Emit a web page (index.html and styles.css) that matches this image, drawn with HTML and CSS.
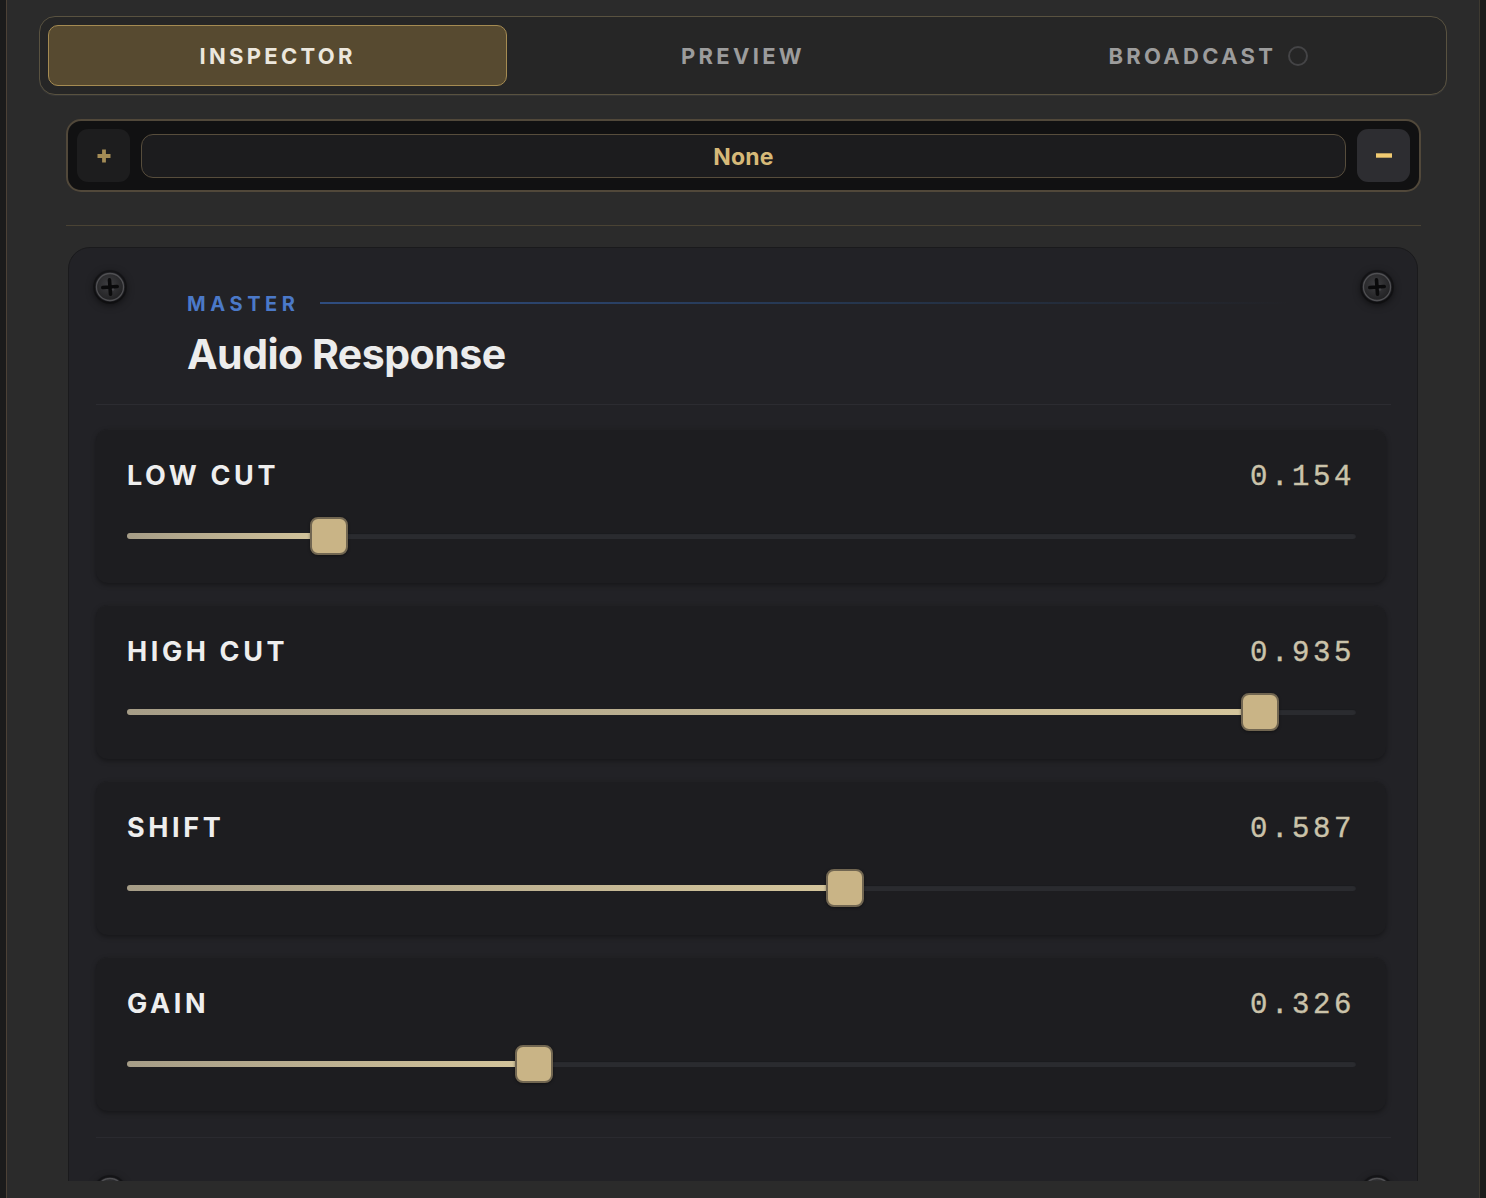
FILE: index.html
```html
<!DOCTYPE html>
<html lang="en">
<head>
<meta charset="utf-8">
<title>Inspector</title>
<link rel="stylesheet" href="styles.css">
</head>
<body>
<div class="app">
  <header class="tabs-wrap">
    <nav class="tabs">
      <button class="tab tab-active">INSPECTOR</button>
      <button class="tab">PREVIEW</button>
      <button class="tab">BROADCAST <span class="live-dot"></span></button>
    </nav>
  </header>

  <section class="preset-wrap">
    <div class="preset">
      <button class="preset-btn preset-add" aria-label="Add preset">
        <svg width="16" height="16" viewBox="0 0 16 16"><path d="M8 1.5v13M1.5 8h13" stroke="#a48c56" stroke-width="3.8" stroke-linecap="butt"/></svg>
      </button>
      <div class="preset-field">None</div>
      <button class="preset-btn preset-remove" aria-label="Remove preset">
        <svg width="16" height="5" viewBox="0 0 16 5"><rect x="0" y="0.3" width="16" height="4.4" fill="#f1cb72"/></svg>
      </button>
    </div>
    <div class="rule"></div>
  </section>

  <main class="scroll">
    <article class="card">
      <svg class="screw screw-tl" width="30" height="30" viewBox="0 0 30 30"><use href="#screw"/></svg>
      <svg class="screw screw-tr" width="30" height="30" viewBox="0 0 30 30"><use href="#screw"/></svg>
      <svg class="screw screw-bl" width="30" height="30" viewBox="0 0 30 30"><use href="#screw"/></svg>
      <svg class="screw screw-br" width="30" height="30" viewBox="0 0 30 30"><use href="#screw"/></svg>

      <div class="card-head">
        <div class="eyebrow"><span>MASTER</span><i class="eyebrow-line"></i></div>
        <h1 class="title">Audio Response</h1>
      </div>

      <div class="params">
        <div class="param">
          <div class="param-row"><span class="param-name">LOW CUT</span><span class="param-value">0.154</span></div>
          <div class="track" style="--v:0.154"><div class="fill"></div><div class="thumb"></div></div>
        </div>
        <div class="param">
          <div class="param-row"><span class="param-name">HIGH CUT</span><span class="param-value">0.935</span></div>
          <div class="track" style="--v:0.935"><div class="fill"></div><div class="thumb"></div></div>
        </div>
        <div class="param">
          <div class="param-row"><span class="param-name">SHIFT</span><span class="param-value">0.587</span></div>
          <div class="track" style="--v:0.587"><div class="fill"></div><div class="thumb"></div></div>
        </div>
        <div class="param">
          <div class="param-row"><span class="param-name">GAIN</span><span class="param-value">0.326</span></div>
          <div class="track" style="--v:0.326"><div class="fill"></div><div class="thumb"></div></div>
        </div>
      </div>

      <div class="card-foot"></div>
    </article>
  </main>
</div>

<svg width="0" height="0" style="position:absolute">
  <defs>
    <radialGradient id="screwFace" cx="45%" cy="40%" r="60%">
      <stop offset="0" stop-color="#3e3e41"/>
      <stop offset="1" stop-color="#212123"/>
    </radialGradient>
    <symbol id="screw" viewBox="0 0 30 30">
      <circle cx="15" cy="15" r="13.5" fill="url(#screwFace)" stroke="#505053" stroke-width="1.3"/>
      <g transform="rotate(-4 15 15)" stroke="#0a0a0b" stroke-width="3.6" stroke-linecap="round">
        <path d="M15 7.8v14.4M7.8 15h14.4"/>
      </g>
      <circle cx="18" cy="17.5" r="1.3" fill="#5a5a5f" opacity="0.45"/>
    </symbol>
  </defs>
</svg>
</body>
</html>
```

FILE: styles.css
```css
* { box-sizing: border-box; }

html, body {
  margin: 0;
  padding: 0;
  background: #1b1b1b;
  font-family: Inter, "Noto Sans", "Liberation Sans", sans-serif;
}

.app {
  margin-left: 6px;
  width: 1474px;
  height: 1198px;
  background: #2b2b2b;
  border-left: 1px solid #4c4136;
  border-right: 1px solid #3e3a31;
  display: flex;
  flex-direction: column;
  padding-bottom: 17px;
  overflow: hidden;
}

/* ---- top tab bar ---- */
.tabs-wrap {
  padding: 16px 32px 0;
}

.tabs {
  height: 79px;
  border: 1px solid #595240;
  border-radius: 16px;
  background: #262626;
  padding: 8px;
  display: grid;
  grid-template-columns: repeat(3, 1fr);
  gap: 6px;
  box-shadow: 0 1px 0 rgba(255, 255, 255, 0.05);
}

.tab {
  font: 700 22px/1 Inter, "Liberation Sans", sans-serif;
  letter-spacing: 3.3px;
  color: #9c9c9c;
  background: transparent;
  border: 1px solid transparent;
  border-radius: 10px;
  display: flex;
  align-items: center;
  justify-content: center;
  padding: 0;
  cursor: pointer;
}

.tab-active {
  background: #574a30;
  border-color: #a58b52;
  color: #ece7dd;
}

.live-dot {
  width: 20px;
  height: 20px;
  border-radius: 50%;
  border: 2px solid #444446;
  margin-left: 12px;
}

/* ---- preset selector ---- */
.preset-wrap {
  padding: 24px 58px 0 59px;
}

.preset {
  height: 73px;
  border: 2px solid #51483a;
  border-radius: 15px;
  background: #111112;
  padding: 8px 9px;
  display: flex;
  align-items: center;
  gap: 11px;
}

.preset-btn {
  width: 53px;
  height: 53px;
  flex: none;
  border: 0;
  border-radius: 11px;
  display: flex;
  align-items: center;
  justify-content: center;
  padding: 0;
}

.preset-add { background: #1d1d1e; }
.preset-remove { background: #2d2d31; }

.preset-field {
  flex: 1;
  height: 44px;
  border: 1.5px solid #574d3c;
  border-radius: 12px;
  background: #1c1c1e;
  display: flex;
  align-items: center;
  justify-content: center;
  font-size: 23px;
  font-weight: 700;
  color: #d6b978;
  letter-spacing: 0.2px;
  padding-top: 2px;
}

.rule {
  height: 1px;
  background: #4a4334;
  margin-top: 33px;
}

/* ---- scrolling content ---- */
.scroll {
  flex: 1;
  min-height: 0;
  overflow: hidden;
  padding: 21px 61px 0;
}

.card {
  position: relative;
  background: #222226;
  border: 1px solid #1a1a1c;
  border-radius: 22px;
  padding: 0 31px 0 27px;
}

.screw {
  position: absolute;
  border-radius: 50%;
  box-shadow: 0 0 0 2px rgba(0, 0, 0, 0.28), 0 2px 8px rgba(0, 0, 0, 0.75);
}
.screw-tl { top: 24px; left: 26px; }
.screw-tr { top: 24px; right: 25px; }
.screw-bl { bottom: 25px; left: 26px; }
.screw-br { bottom: 25px; right: 25px; }

.card-head {
  padding: 43px 0 0 91px;
  margin-right: -5px;
  height: 157px;
  border-bottom: 1px solid #2c2c31;
}

.eyebrow {
  display: flex;
  align-items: center;
  gap: 20px;
  height: 26px;
  padding-right: 100px;
  font-size: 20px;
  font-weight: 700;
  letter-spacing: 4.6px;
  color: #4b79c8;
}

.eyebrow-line {
  flex: 1;
  height: 2px;
  margin-top: -2px;
  background: linear-gradient(90deg, #2f4d80 0%, rgba(40, 70, 110, 0.55) 55%, rgba(40, 60, 90, 0) 100%);
}

.title {
  margin: 13px 0 0;
  font-size: 41px;
  line-height: 48px;
  font-weight: 700;
  letter-spacing: -0.5px;
  color: #ececec;
}

.params {
  margin-top: 24px;
  display: flex;
  flex-direction: column;
  gap: 22px;
}

.param {
  height: 154px;
  background: #1d1d20;
  border-radius: 12px;
  padding: 28px 30px 0 31px;
  box-shadow: 0 2px 5px rgba(0, 0, 0, 0.35), inset 0 1px 0 rgba(255, 255, 255, 0.015);
}

.param-row {
  height: 36px;
  display: flex;
  align-items: center;
  justify-content: space-between;
}

.param-name {
  font-size: 27px;
  font-weight: 700;
  letter-spacing: 3.6px;
  color: #eeeeee;
}

.param-value {
  font-family: "Liberation Mono", "DejaVu Sans Mono", monospace;
  font-size: 29px;
  letter-spacing: 3.6px;
  margin-right: 1px;
  padding-top: 4px;
  color: #cbc3aa;
  -webkit-text-stroke: 0.4px #cbc3aa;
}

.track {
  position: relative;
  margin-top: 24px;
  height: 38px;
}

.track::before {
  content: "";
  position: absolute;
  left: 0;
  right: 0;
  top: 16px;
  height: 6px;
  border-radius: 3px;
  background: #2a2b2f;
  box-shadow: inset 0 1px 1px rgba(0, 0, 0, 0.4);
}

.fill {
  position: absolute;
  left: 0;
  top: 16px;
  height: 6px;
  border-radius: 3px;
  width: calc(var(--v) * (100% - 38px) + 19px);
  background: linear-gradient(90deg, #a69d87, #d5c69c);
}

.thumb {
  position: absolute;
  top: 0;
  left: calc(var(--v) * (100% - 38px));
  width: 38px;
  height: 38px;
  border-radius: 8px;
  background: #c9b486;
  border: 2px solid #716651;
  box-shadow: 0 1px 3px rgba(0, 0, 0, 0.4);
}

.card-foot {
  margin-top: 26px;
  margin-right: -5px;
  height: 95px;
  border-top: 1px solid #2a2a2f;
}
```
